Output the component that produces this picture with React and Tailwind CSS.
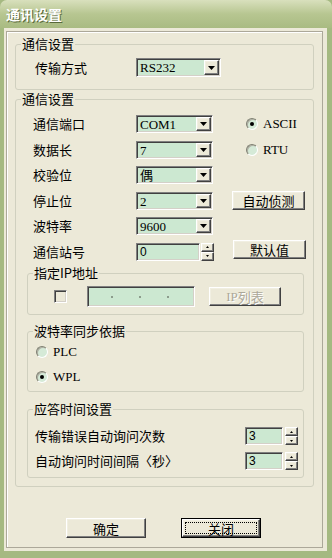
import React from "react";

// classic win32 bevels
const SUNKEN =
  "border border-t-[#808080] border-l-[#808080] border-r-white border-b-white shadow-[inset_1px_1px_0_#404040,inset_-1px_-1px_0_#d4d0c8]";
const RAISED =
  "border border-t-white border-l-white border-r-[#404040] border-b-[#404040] shadow-[inset_-1px_-1px_0_#808080,inset_1px_1px_0_#f1efe2] bg-[#ece9d8]";
const LATIN = "font-['Liberation_Serif','Noto_Sans_CJK_SC',serif]";

function Group({ title, className, children }) {
  return (
    <fieldset className={`border border-[#d0d0bf] rounded-[3px] ${className}`}>
      <legend className="ml-[5px] px-[1px] text-[13px] leading-[16px]">{title}</legend>
      {children}
    </fieldset>
  );
}

function DownArrow() {
  return (
    <svg width="7" height="4" viewBox="0 0 7 4">
      <path d="M0 0h7L3.5 4z" fill="#000" />
    </svg>
  );
}

function Combo({ value, className }) {
  return (
    <div className={`flex bg-[#cce8d1] p-[1px] ${SUNKEN} ${className}`}>
      <div className={`flex-1 pl-[2px] text-[13px] leading-[15px] ${LATIN}`}>{value}</div>
      <div className={`w-[15px] flex items-center justify-center ${RAISED}`}>
        <DownArrow />
      </div>
    </div>
  );
}

function SpinButtons() {
  return (
    <div className="flex flex-col w-[13px] h-[18px]">
      <div className={`flex-1 flex items-center justify-center ${RAISED}`}>
        <svg width="3" height="2" viewBox="0 0 3 2">
          <path d="M1.5 0L3 2H0z" fill="#000" />
        </svg>
      </div>
      <div className={`flex-1 flex items-center justify-center ${RAISED}`}>
        <svg width="3" height="2" viewBox="0 0 3 2">
          <path d="M0 0h3L1.5 2z" fill="#000" />
        </svg>
      </div>
    </div>
  );
}

function Spin({ value, fieldClass, gapClass }) {
  return (
    <div className={`flex items-center ${gapClass}`}>
      <div
        className={`h-[18px] bg-[#cce8d1] pl-[3px] text-[12px] leading-[16px] font-['Liberation_Sans',sans-serif] ${SUNKEN} ${fieldClass}`}
      >
        {value}
      </div>
      <SpinButtons />
    </div>
  );
}

function Radio({ checked }) {
  return (
    <div className="w-[12px] h-[12px] rounded-full border border-t-[#7f7f72] border-l-[#7f7f72] border-r-white border-b-white bg-[#d5ead7] shadow-[inset_1px_1px_0_#b0b0a4] flex items-center justify-center">
      {checked ? <div className="w-[4px] h-[4px] rounded-full bg-black" /> : null}
    </div>
  );
}

function Button({ children, className }) {
  return (
    <div className={`flex items-center justify-center text-[13px] leading-[15px] ${RAISED} ${className}`}>
      {children}
    </div>
  );
}

function Row({ label, children, right }) {
  return (
    <div className="flex items-center h-[18px]">
      <span className="w-[103px] text-[13px] leading-[16px]">{label}</span>
      {children}
      {right}
    </div>
  );
}

function RadioRight({ checked, label }) {
  return (
    <div className="ml-[33px] flex items-center gap-[5px]">
      <Radio checked={checked} />
      <span className={`text-[13px] leading-[16px] ${LATIN}`}>{label}</span>
    </div>
  );
}

export default function App() {
  return (
    <div className="w-[332px] h-[558px] flex flex-col bg-[#a5b981] text-black font-['Noto_Sans_CJK_SC',sans-serif]">
      {/* title bar */}
      <div className="h-[28px] shrink-0 rounded-t-[7px] bg-gradient-to-b from-[#d9e0bd] via-[#b7c691] to-[#a9bb82] flex items-center pl-[6px]">
        <span className="text-[14px] leading-[16px] font-bold text-white [text-shadow:1px_1px_0_#58683a]">
          通讯设置
        </span>
      </div>

      {/* client area */}
      <div className="flex-1 ml-[4px] mr-[5px] mb-[7px] bg-[#ece9d8] pt-[3px] pb-[3px] pl-[2px] pr-[4px] flex">
        <div className="flex-1 border border-[#aca899] shadow-[inset_1px_1px_0_#fff] pt-[4px] pl-[8px] flex flex-col">
          <Group title="通信设置" className="w-[299px] pb-[12px]">
            <div className="mt-[6px] flex items-center h-[19px]">
              <span className="ml-[19px] w-[101px] text-[13px] leading-[16px]">传输方式</span>
              <Combo value="RS232" className="w-[85px] h-[19px]" />
            </div>
          </Group>

          <Group title="通信设置" className="mt-[1px] w-[299px] pb-[8px]">
            <div className="mt-[8px] pl-[17px] flex flex-col gap-[7.5px]">
              <Row label="通信端口" right={<RadioRight checked label="ASCII" />}>
                <Combo value="COM1" className="w-[77px] h-[18px]" />
              </Row>
              <Row label="数据长" right={<RadioRight label="RTU" />}>
                <Combo value="7" className="w-[77px] h-[18px]" />
              </Row>
              <Row label="校验位">
                <Combo value="偶" className="w-[77px] h-[18px]" />
              </Row>
              <Row label="停止位" right={<Button className="ml-[19px] w-[73px] h-[19px]">自动侦测</Button>}>
                <Combo value="2" className="w-[77px] h-[18px]" />
              </Row>
              <Row label="波特率">
                <Combo value="9600" className="w-[77px] h-[18px]" />
              </Row>
              <Row label="通信站号" right={<Button className="ml-[19px] -mt-[4px] w-[73px] h-[19px]">默认值</Button>}>
                <Spin value="0" fieldClass="w-[64px]" gapClass="gap-[1px]" />
              </Row>
            </div>

            <Group title="指定IP地址" className="mt-[4.5px] ml-[11px] w-[277px] pb-[7px]">
              <div className="mt-[5px] h-[21px] flex items-center">
                <div className={`ml-[26px] w-[13px] h-[13px] bg-[#ece9d8] ${SUNKEN}`} />
                <div className={`ml-[20px] w-[108px] h-[21px] bg-[#cce8d1] flex items-center pl-[23px] gap-[26px] ${SUNKEN}`}>
                  <span className="w-[2px] h-[2px] bg-[#8c9c8c]" />
                  <span className="w-[2px] h-[2px] bg-[#8c9c8c]" />
                  <span className="w-[2px] h-[2px] bg-[#8c9c8c]" />
                </div>
                <Button className="ml-[14px] w-[72px] h-[19px] text-[#aca899] [text-shadow:1px_1px_0_#fff]">
                  <span className={LATIN}>IP</span>列表
                </Button>
              </div>
            </Group>

            <Group title="波特率同步依据" className="mt-[8px] ml-[11px] w-[277px] pb-[6px]">
              <div className="mt-[5px] pl-[8px] flex flex-col gap-[9px]">
                <div className="h-[16px] flex items-center gap-[5px]">
                  <Radio />
                  <span className={`text-[13px] leading-[16px] ${LATIN}`}>PLC</span>
                </div>
                <div className="h-[16px] flex items-center gap-[5px]">
                  <Radio checked />
                  <span className={`text-[13px] leading-[16px] ${LATIN}`}>WPL</span>
                </div>
              </div>
            </Group>

            <Group title="应答时间设置" className="mt-[9px] ml-[11px] w-[277px] pb-[7px]">
              <div className="mt-[10px] pl-[7px] flex flex-col gap-[7px]">
                <div className="h-[18px] flex items-center">
                  <span className="w-[210px] text-[13px] leading-[16px]">传输错误自动询问次数</span>
                  <Spin value="3" fieldClass="w-[38px]" gapClass="gap-[2px]" />
                </div>
                <div className="h-[18px] flex items-center">
                  <span className="w-[210px] text-[13px] leading-[16px]">自动询问时间间隔〈秒〉</span>
                  <Spin value="3" fieldClass="w-[38px]" gapClass="gap-[2px]" />
                </div>
              </div>
            </Group>
          </Group>

          {/* dialog buttons */}
          <div className="mt-[31px] flex items-center">
            <Button className="ml-[51px] w-[80px] h-[20px]">确定</Button>
            <div className="ml-[35px] w-[80px] h-[20px] border border-black p-0">
              <div className={`w-full h-full p-[2px] ${RAISED}`}>
                <div className="w-full h-full border border-dotted border-black flex items-center justify-center text-[13px] leading-[15px]">
                  关闭
                </div>
              </div>
            </div>
          </div>
        </div>
      </div>
    </div>
  );
}
